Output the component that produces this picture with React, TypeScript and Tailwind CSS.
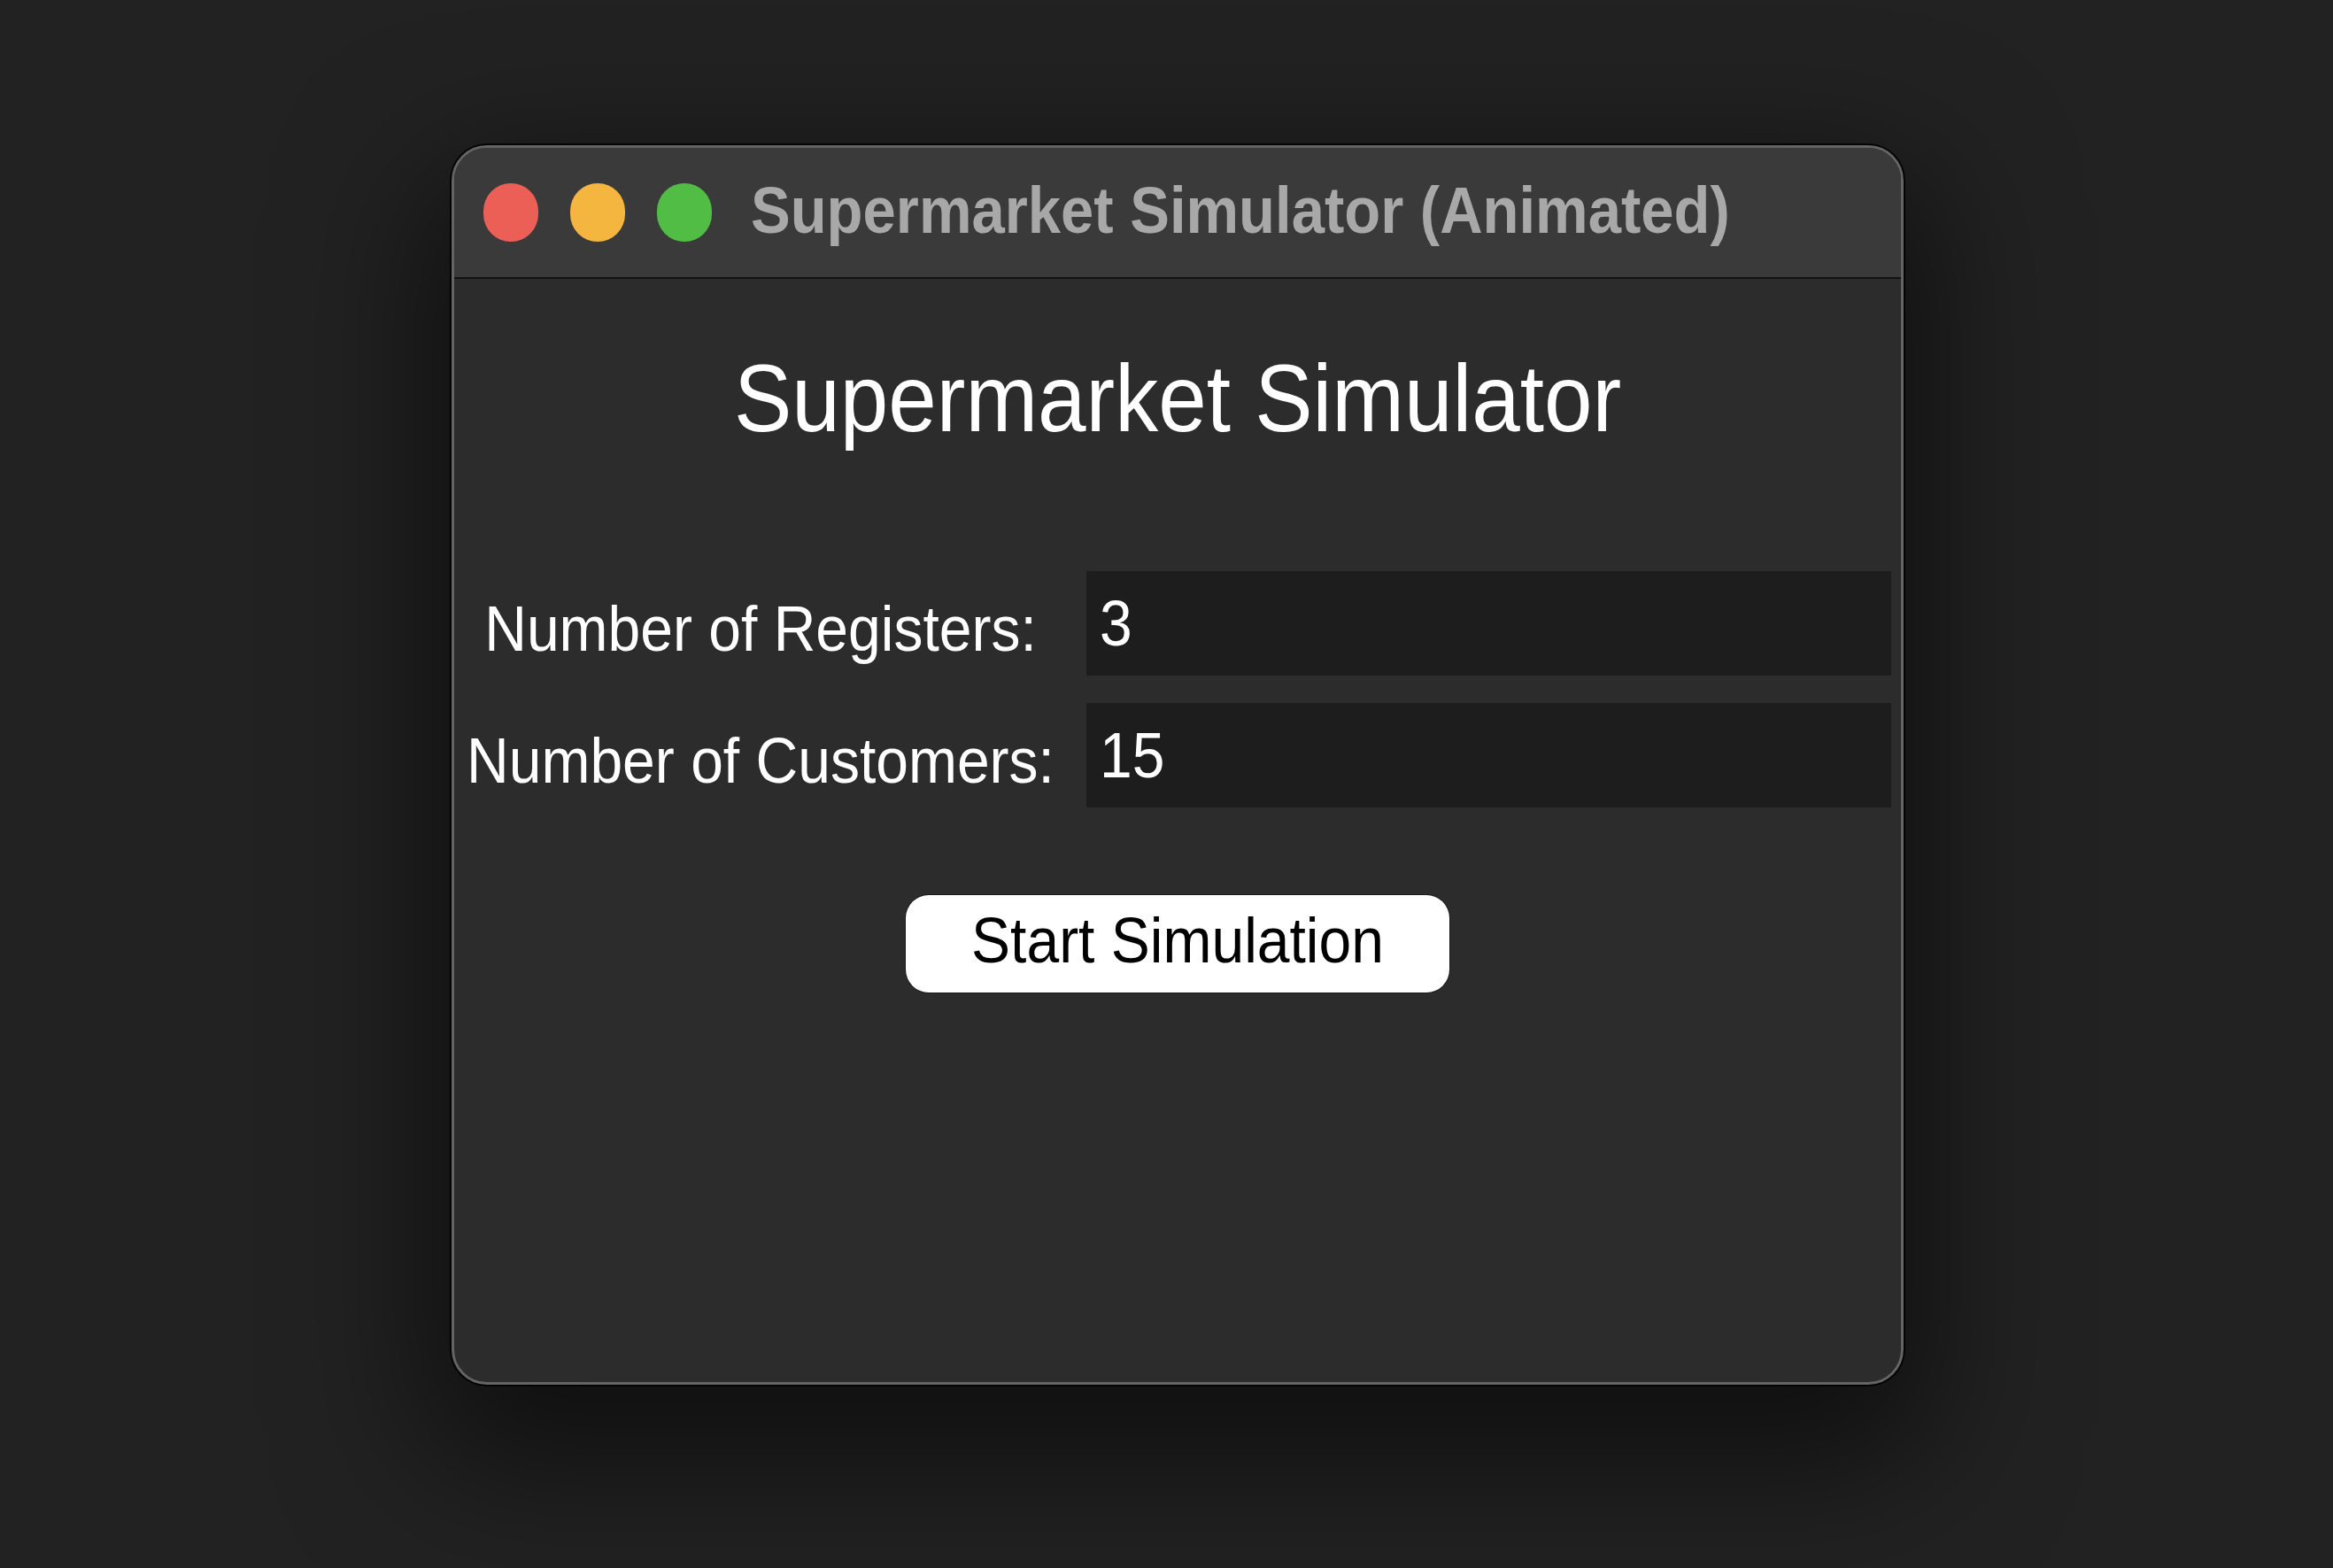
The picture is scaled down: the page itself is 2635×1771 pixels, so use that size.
import React from "react";

export default function App() {
  return (
    <div className="min-h-screen w-full bg-[#222222] pt-[164px] pl-[510px] overflow-hidden" style={{ fontFamily: '"Liberation Sans", Arial, sans-serif' }}>
      <div className="w-[1640px] h-[1400px] rounded-[40px] border-[3px] border-[#646464] bg-[#2c2c2c] overflow-hidden flex flex-col shadow-[0_0_0_2px_rgba(0,0,0,0.85),0_60px_160px_30px_rgba(0,0,0,0.55)]">
        {/* Title bar */}
        <div className="h-[148px] shrink-0 bg-[#3a3a3a] border-b-2 border-[#111111] flex items-center pl-[33px]">
          <div className="flex items-center gap-[36px]">
            <span className="block w-[62px] h-[66px] rounded-full bg-[#ec5f57]" />
            <span className="block w-[62px] h-[66px] rounded-full bg-[#f4b63f]" />
            <span className="block w-[62px] h-[66px] rounded-full bg-[#51bd44]" />
          </div>
          <span className="ml-[44px] inline-block text-[67px] leading-none font-bold text-[#a8a8a8] scale-y-110 -mt-[6px] whitespace-nowrap">
            Supermarket Simulator (Animated)
          </span>
        </div>

        {/* Body */}
        <div className="flex flex-col items-center pt-[86px]">
          <h1 className="inline-block text-[98px] leading-none font-normal text-white scale-y-110 whitespace-nowrap">
            Supermarket Simulator
          </h1>

          <div className="mt-[146px] w-full grid grid-cols-[692px_909px] gap-x-[22px] gap-y-[31px]">
            <div className="flex items-center justify-center pt-[12px]">
              <span className="inline-block text-[66px] leading-none text-white scale-y-110 whitespace-nowrap">Number of Registers:</span>
            </div>
            <div className="h-[118px] bg-[#1d1d1d] flex items-center pl-[15px]">
              <span className="inline-block text-[66px] leading-none text-white scale-y-110">3</span>
            </div>
            <div className="flex items-center justify-center pt-[12px]">
              <span className="inline-block text-[66px] leading-none text-white scale-y-110 whitespace-nowrap">Number of Customers:</span>
            </div>
            <div className="h-[118px] bg-[#1d1d1d] flex items-center pl-[15px]">
              <span className="inline-block text-[66px] leading-none text-white scale-y-110">15</span>
            </div>
          </div>

          <button className="mt-[99px] w-[614px] h-[110px] rounded-[26px] bg-white flex items-center justify-center shadow-[0_0_0_1px_rgba(0,0,0,0.4)]">
            <span className="inline-block text-[66px] leading-none text-black scale-y-110 -mt-[8px] whitespace-nowrap">Start Simulation</span>
          </button>
        </div>
      </div>
    </div>
  );
}
